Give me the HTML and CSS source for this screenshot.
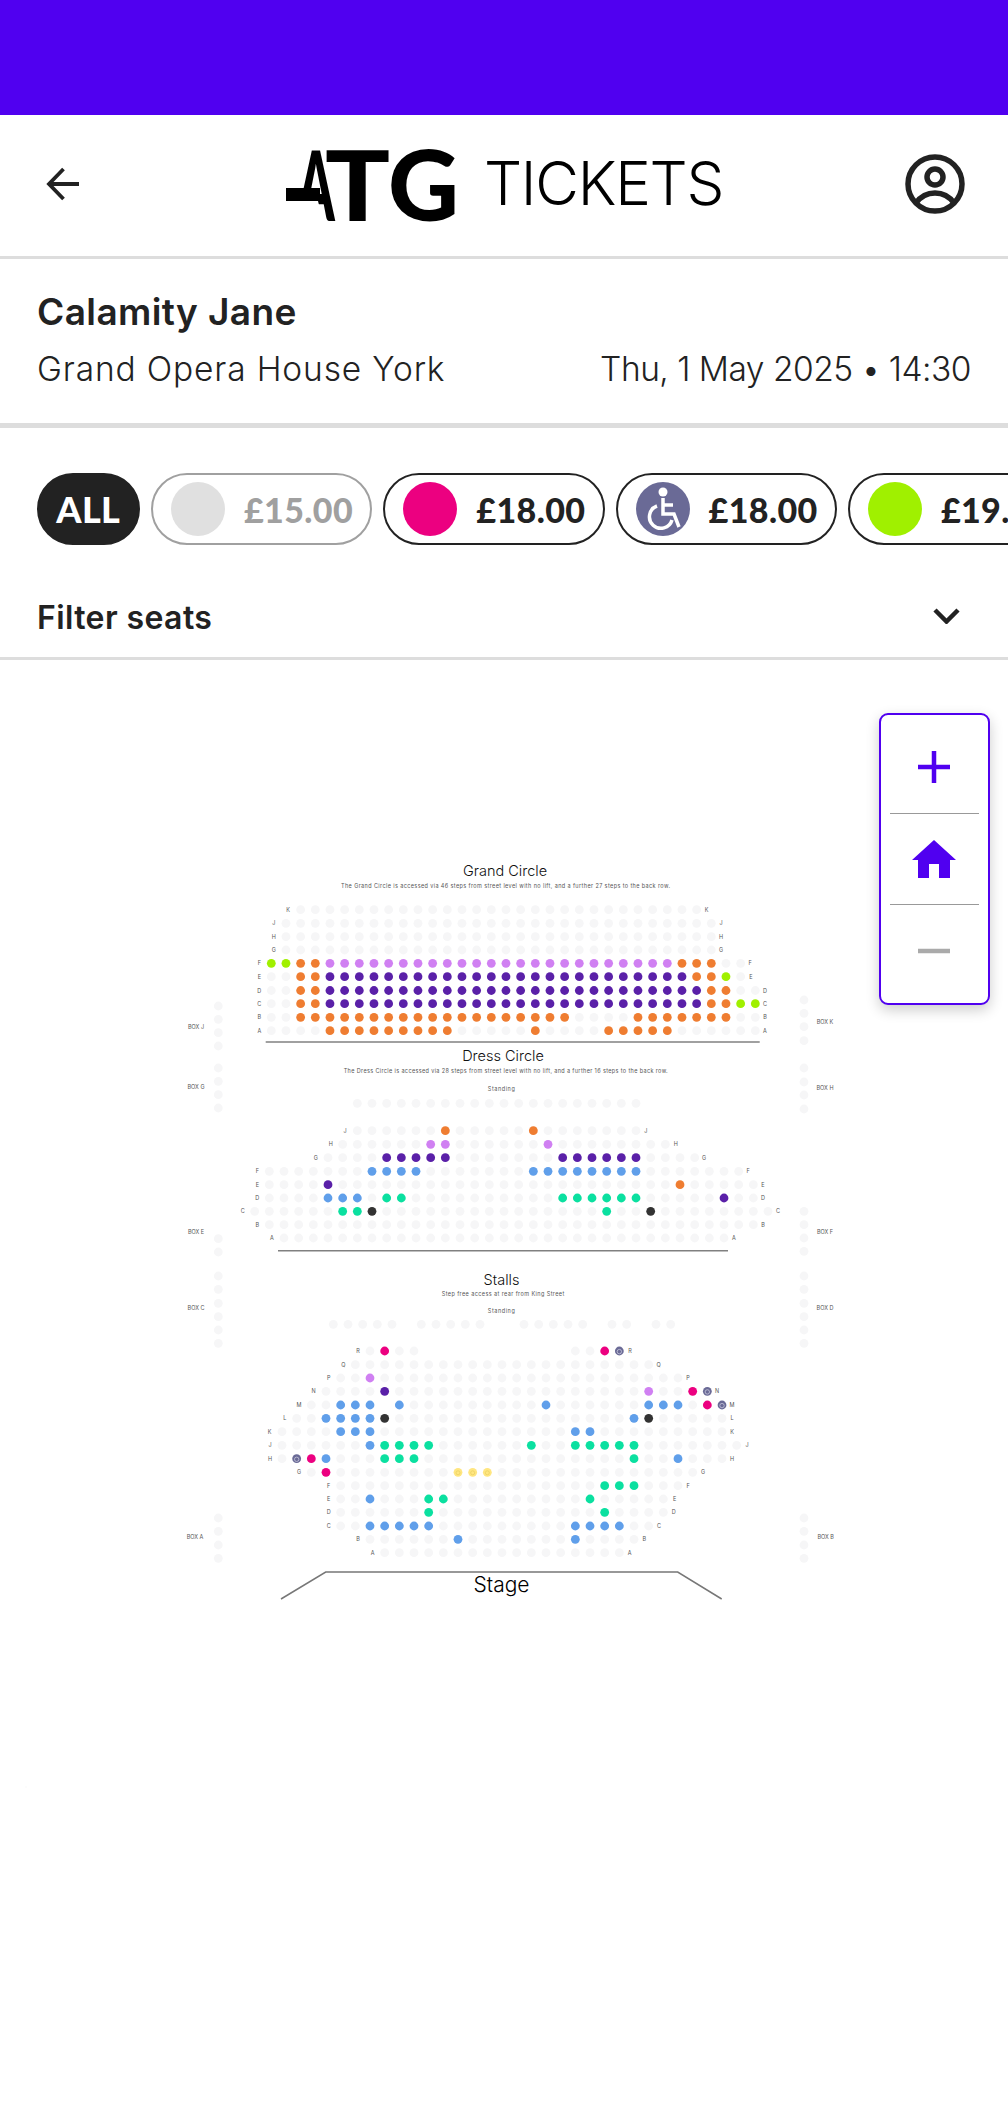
FILE: index.html
```html
<!DOCTYPE html>
<html lang="en">
<head>
<meta charset="utf-8">
<title>Calamity Jane – ATG Tickets</title>
<link rel="stylesheet" href="styles.css">
</head>
<body>
<div class="top-band"></div>
<header class="site-header">
  <svg class="back-icon" viewBox="0 0 35 34" aria-label="Back"><path d="M33 17H4M17.500 2 3 17l14.500 15"/></svg>
  <div class="logo"><span class="logo-atg"><span class="atg-a">A</span><span class="atg-t">T</span><span class="atg-g">G</span><svg class="logo-mask" viewBox="0 0 100 72"><path class="logo-cut" d="M-2 54H32L37 74H-2Z"/><path class="logo-bar" d="M0 41H34V54H0Z"/></svg></span><span class="logo-tickets">TICKETS</span></div>
  <svg class="profile-icon" viewBox="0 0 60 60" aria-label="Account"><circle class="ring" cx="30" cy="30" r="27"/><circle class="ring" cx="30" cy="23" r="8"/><path class="ring" d="M11 49c5-7 12-10 19-10s14 3 19 10"/></svg>
</header>
<section class="event-info">
  <h1 class="event-title">Calamity Jane</h1>
  <div class="event-meta"><span class="event-venue">Grand Opera House York</span><span class="event-date">Thu, 1 May 2025 • 14:30</span></div>
</section>
<nav class="price-strip">
  <button class="pill pill-all">ALL</button>
  <button class="pill pill-off"><span class="swatch swatch-grey"></span><span>£15.00</span></button>
  <button class="pill"><span class="swatch swatch-pink"></span><span>£18.00</span></button>
  <button class="pill"><span class="swatch swatch-access"><svg class="access-icon" viewBox="0 0 54 54"><circle class="access-head" cx="27" cy="10" r="4.500"/><path class="access-line" d="M27 16v16h11l5 13"/><path class="access-line" d="M27 23h10"/><path class="access-line" d="M21 24a11.500 11.500 0 1 0 15 14"/></svg></span><span>£18.00</span></button>
  <button class="pill"><span class="swatch swatch-lime"></span><span>£19.50</span></button>
</nav>
<div class="filter-row">
  <span class="filter-label">Filter seats</span>
  <svg class="chevron" viewBox="0 0 27 16"><path d="M2 2l11.500 11.500L25 2"/></svg>
</div>
<main class="map-area">
  <svg id="seatmap" class="seatmap" viewBox="0 660 1008 1467"></svg>
  <div class="zoom-controls">
    <button class="zoom-cell"><svg class="zoom-plus" viewBox="0 0 32 32"><path d="M16 0v32M0 16h32"/></svg></button>
    <button class="zoom-cell zoom-sep"><svg class="zoom-home" viewBox="0 0 44 38"><path d="M22 0 44 20H38V38H27V24H17V38H6V20H0Z"/></svg></button>
    <button class="zoom-cell zoom-sep"><svg class="zoom-minus" viewBox="0 0 32 6"><path d="M0 3h32"/></svg></button>
  </div>
</main>
<script src="seatmap.js"></script>
</body>
</html>
```
FILE: styles.css
```css
* { box-sizing: border-box; }
html, body { margin: 0; padding: 0; }
body {
  width: 1008px;
  height: 2127px;
  overflow: hidden;
  background: #fff;
  color: #222;
  font-family: "Inter", "Lato", sans-serif;
}
button { font-family: inherit; background: none; border: 0; padding: 0; color: inherit; }

.top-band { height: 115px; background: #5000f0; }

.site-header {
  height: 144px;
  display: flex;
  align-items: center;
  padding: 0 43px 3px 46px;
  border-bottom: 3px solid #ddd;
}
.back-icon { width: 35px; height: 34px; fill: none; stroke: #222; stroke-width: 3.800; }
.logo { display: flex; align-items: center; margin: -2px 0 0 205px; color: #000; }
.logo-atg {
  position: relative;
  display: flex;
  font-family: "Lato", sans-serif;
  font-size: 98px;
  line-height: 72px;
  font-weight: 900;
  width: 198px;
}
.atg-a { width: 28px; margin-left: 11px; transform: scaleX(.55); transform-origin: left; }
.atg-t { width: 63px; transform: scaleX(1.1); transform-origin: left; }
.atg-g { width: 66px; transform-origin: left; }
.logo-mask { position: absolute; left: 0; top: 0; width: 100px; height: 72px; overflow: visible; }
.logo-cut { fill: #fff; }
.logo-bar { fill: #000; }
.logo-tickets { font-size: 60px; line-height: 60px; font-weight: 300; letter-spacing: -1.300px; }
.profile-icon { width: 60px; height: 60px; margin-left: auto; fill: none; }
.ring { stroke: #222; stroke-width: 5.500; fill: none; }

.event-info { padding: 30px 37px 34px; border-bottom: 5px solid #ddd; }
.event-title { margin: 0 0 14px; font-size: 37px; line-height: 46px; font-weight: 600; letter-spacing: .4px; }
.event-meta { display: flex; justify-content: space-between; font-size: 33.500px; line-height: 40px; font-weight: 300; }
.event-venue { letter-spacing: .85px; }
.event-date { letter-spacing: -.5px; }

.price-strip {
  display: flex;
  gap: 11px;
  padding: 45px 0 0 36.600px;
  overflow: hidden;
}
.pill {
  flex: none;
  height: 72px;
  width: 221.300px;
  display: flex;
  align-items: center;
  gap: 19px;
  padding: 0 18px;
  border: 2.500px solid #222;
  border-radius: 36px;
  font-family: "Lato", sans-serif;
  font-size: 34px;
  font-weight: 900;
  letter-spacing: .4px;
}
.pill-all { width: 103.400px; background: #222; color: #fff; justify-content: center; padding: 0; gap: 0; font-size: 36px; }
.pill-off { border-color: #a0a0a0; color: #a0a0a0; }
.swatch { flex: none; width: 54px; height: 54px; border-radius: 50%; }
.swatch-grey { background: #e0e0e0; }
.swatch-pink { background: #ec0080; }
.swatch-lime { background: #a0f000; }
.swatch-access { background: #6a6a96; }
.access-icon { display: block; width: 54px; height: 54px; }
.access-head { fill: #fff; }
.access-line { fill: none; stroke: #fff; stroke-width: 3.500; }

.filter-row {
  display: flex;
  align-items: center;
  justify-content: space-between;
  padding: 53px 48px 19px 37px;
  border-bottom: 3px solid #ddd;
}
.filter-label { font-size: 32px; line-height: 40px; font-weight: 600; letter-spacing: .4px; }
.chevron { width: 27px; height: 16px; fill: none; stroke: #222; stroke-width: 4.500; margin-top: -4px; }

.map-area { position: relative; height: 1467px; }
.seatmap { display: block; width: 1008px; height: 1467px; }

.zoom-controls {
  position: absolute;
  top: 53px;
  right: 18.500px;
  width: 111px;
  height: 292px;
  padding: 7px 9px;
  display: flex;
  flex-direction: column;
  background: #fff;
  border: 2.500px solid #5000f0;
  border-radius: 9px;
  box-shadow: 0 5px 14px rgba(0, 0, 0, .2);
}
.zoom-cell { flex: 1; display: flex; align-items: center; justify-content: center; }
.zoom-sep { border-top: 1.500px solid #999; }
.zoom-plus { width: 32px; height: 32px; fill: none; stroke: #5000f0; stroke-width: 4.500; }
.zoom-home { width: 44px; height: 38px; fill: #5000f0; }
.zoom-minus { width: 32px; height: 6px; fill: none; stroke: #aaa; stroke-width: 4.500; }

.seat-o { fill: #f6f6f7; }
.seat-g { fill: #a0f000; }
.seat-r { fill: #ef7d31; }
.seat-l { fill: #d080f2; }
.seat-p { fill: #5a20a8; }
.seat-b { fill: #609fea; }
.seat-t { fill: #0be0a0; }
.seat-k { fill: #333; }
.seat-m { fill: #ec0080; }
.seat-w { fill: #6a6a96; }
.seat-y { fill: #ffe680; }
.seat-mark { fill: none; stroke: #c8c8dc; stroke-width: .8; }
.seat-mark-y { fill: none; stroke: #e8cf60; stroke-width: .7; }
.row-label { font-size: 5.500px; fill: #555; text-anchor: middle; }
.box-label { font-size: 5.500px; fill: #555; text-anchor: middle; }
.map-title { font-size: 14.500px; font-weight: 300; fill: #111; text-anchor: middle; }
.map-note { font-size: 5.500px; fill: #555; text-anchor: middle; }
.stage-title { font-size: 21px; font-weight: 300; fill: #000; text-anchor: middle; }
.stage-line { fill: none; stroke: #777; stroke-width: 1.500; }
.rule-line { stroke: #808080; stroke-width: 1.500; }
```
FILE: seatmap.js
```js
var svg = document.getElementById('seatmap');
var NS = 'http://www.w3.org/2000/svg';
var STEP = 14.667;
var R = 4.4;

function el(name, attrs, text) {
  var node = document.createElementNS(NS, name);
  for (var key in attrs) node.setAttribute(key, attrs[key]);
  if (text) node.textContent = text;
  svg.appendChild(node);
  return node;
}

function seat(x, y, kind) {
  el('circle', { cx: x, cy: y, r: R, 'class': 'seat-' + kind });
  if (kind === 'w') {
    el('circle', { cx: x, cy: y + .6, r: 2.2, 'class': 'seat-mark' });
  }
  if (kind === 'y') {
    el('circle', { cx: x, cy: y + .5, r: 2, 'class': 'seat-mark-y' });
  }
}

function label(x, y, text, cls) {
  el('text', { x: x, y: y + 2, 'class': cls }, text);
}

function drawRows(x0, rows) {
  rows.forEach(function (row) {
    var col = 0;
    row[4].split(' ').forEach(function (run) {
      var kind = run.charAt(0);
      var count = parseInt(run.slice(1), 10);
      for (var i = 0; i < count; i++, col++) {
        if (kind !== '.') seat(x0 + col * STEP, row[0], kind);
      }
    });
    if (row[1]) {
      label(row[2], row[0], row[1], 'row-label');
      label(row[3], row[0], row[1], 'row-label');
    }
  });
}

function drawBox(x, ys, name, lx, ly) {
  ys.forEach(function (y) { seat(x, y, 'o'); });
  label(lx, ly, name, 'box-label');
}

/* Grand Circle */
drawRows(271.3, [
  [909.7, 'K', 288, 706.7, '.2 o28'],
  [923.3, 'J', 273.7, 721, '.1 o30'],
  [936.7, 'H', 273.7, 721, '.1 o30'],
  [950, 'G', 273.7, 721, '.1 o30'],
  [963.3, 'F', 259.3, 750, 'g2 r2 l24 r3 o2'],
  [976.7, 'E', 259.3, 751, 'o2 r2 p25 r2 g1 o1'],
  [990.5, 'D', 259.3, 765, 'o2 r2 p26 r2 o2'],
  [1003.7, 'C', 259.3, 765, 'o2 r2 p26 r2 g2'],
  [1017.3, 'B', 259.3, 765, 'o2 r19 o4 r7 o2'],
  [1030.7, 'A', 259.3, 765, 'o4 r9 o5 r1 o4 r5 o6']
]);

/* Dress Circle */
drawRows(254.67, [
  [1103.3, '', 0, 0, '.7 o20'],
  [1130.7, 'J', 345, 645.7, '.7 o6 r1 o5 r1 o7'],
  [1144.3, 'H', 330.7, 675.7, '.6 o6 l2 o6 l1 o8'],
  [1157.7, 'G', 315.7, 704, '.5 o4 p5 o7 p6 o4'],
  [1171.3, 'F', 257.3, 748, '.1 o7 b4 o7 b8 o7'],
  [1184.7, 'E', 257.3, 763, '.1 o4 p1 o23 r1 o5'],
  [1198, 'D', 257.3, 763, '.1 o4 b3 o1 t2 o10 t6 o5 p1 o2'],
  [1211.3, 'C', 242.7, 778, 'o6 t2 k1 o15 t1 o2 k1 o8'],
  [1224.7, 'B', 257.3, 763, '.1 o34'],
  [1238, 'A', 272, 734, '.2 o31']
]);

/* Stalls */
drawRows(282, [
  [1351, 'R', 358, 630, '.6 o1 m1 o2 .10 o2 m1 w1'],
  [1364.7, 'Q', 343.3, 658.7, '.5 o21'],
  [1378, 'P', 328.7, 688, '.4 o2 l1 o21'],
  [1391.3, 'N', 313.7, 717, '.3 o4 p1 o17 l1 o2 m1 w1'],
  [1405, 'M', 299, 732, '.2 o2 b3 .1 b1 o9 b1 o6 b3 o1 m1 w1'],
  [1418.3, 'L', 284.7, 732, '.1 o2 b4 k1 o16 b1 k1 o5'],
  [1431.7, 'K', 269.7, 732, 'o4 b3 o13 b2 o9'],
  [1445.3, 'J', 270, 747, 'o6 b1 t4 o6 t1 o2 t5 o7'],
  [1458.7, 'H', 270, 732, 'o1 w1 m1 b1 o3 t3 o14 t1 o2 b1 o3'],
  [1472.3, 'G', 299, 703, '.2 o1 m1 o8 y3 o14'],
  [1485.7, 'F', 328.7, 688, '.4 o18 t3 o3'],
  [1499, 'E', 328.7, 674.7, '.4 o2 b1 o3 t2 o9 t1 o5'],
  [1512.3, 'D', 328.7, 673.7, '.4 o6 t1 o11 t1 o4'],
  [1526, 'C', 328.7, 659, '.4 o2 b5 o9 b4 o2'],
  [1539.3, 'B', 358, 644.3, '.6 o6 b1 o7 b1 o4'],
  [1552.7, 'A', 372.7, 629.7, '.7 o17']
]);

/* Stalls standing row sits off the seat grid */
[490, 534, 578, 622, 666, 754, 798, 842, 886, 930].forEach(function (v) { seat(170 + v / 3, 1324.3, 'o'); });
[72, 116, 160, 204, 248, 336, 380, 468, 512].forEach(function (v) { seat(500 + v / 3, 1324.3, 'o'); });

/* Boxes */
var LEFT = 218.3, RIGHT = 804;
drawBox(LEFT, [1006, 1019.3, 1032.7, 1046], 'BOX J', 196, 1027);
drawBox(RIGHT, [1000, 1013.3, 1026.7, 1040.7], 'BOX K', 825, 1022);
drawBox(LEFT, [1068, 1081.3, 1094.7, 1108], 'BOX G', 196, 1087);
drawBox(RIGHT, [1068, 1082, 1095, 1109], 'BOX H', 825, 1087.6);
drawBox(LEFT, [1238.7, 1252], 'BOX E', 196, 1232);
drawBox(RIGHT, [1211.3, 1224.7, 1238, 1251.3], 'BOX F', 825, 1232);
drawBox(LEFT, [1276, 1289.3, 1303.3, 1316.7, 1330, 1343.3], 'BOX C', 196, 1308);
drawBox(RIGHT, [1276, 1289.3, 1303.3, 1316.7, 1330, 1343.3], 'BOX D', 825, 1308);
drawBox(LEFT, [1518, 1531.3, 1545, 1558.3], 'BOX A', 195, 1537);
drawBox(RIGHT, [1518, 1531.3, 1545, 1558.3], 'BOX B', 825.7, 1537);

/* Section headings */
el('text', { x: 505, y: 876, 'class': 'map-title' }, 'Grand Circle');
el('text', { x: 505.5, y: 887.5, 'class': 'map-note', textLength: 329 }, 'The Grand Circle is accessed via 46 steps from street level with no lift, and a further 27 steps to the back row.');
el('text', { x: 503, y: 1061, 'class': 'map-title' }, 'Dress Circle');
el('text', { x: 505.7, y: 1073, 'class': 'map-note', textLength: 324 }, 'The Dress Circle is accessed via 28 steps from street level with no lift, and a further 16 steps to the back row.');
el('text', { x: 501.3, y: 1091, 'class': 'map-note', textLength: 27 }, 'Standing');
el('text', { x: 501.5, y: 1285, 'class': 'map-title' }, 'Stalls');
el('text', { x: 503, y: 1295.7, 'class': 'map-note', textLength: 122.6 }, 'Step free access at rear from King Street');
el('text', { x: 501.3, y: 1312.7, 'class': 'map-note', textLength: 27 }, 'Standing');

/* Rules and stage */
el('line', { x1: 265.7, y1: 1042, x2: 759.7, y2: 1042, 'class': 'rule-line' });
el('line', { x1: 278, y1: 1250.7, x2: 728, y2: 1250.7, 'class': 'rule-line' });
el('polyline', { points: '281,1599 325.7,1572 677.7,1572 721.7,1599', 'class': 'stage-line' });
el('text', { x: 501.5, y: 1592, 'class': 'stage-title' }, 'Stage');
el('circle', { cx: 26, cy: 1787, r: .7, 'class': 'seat-o' });
```
